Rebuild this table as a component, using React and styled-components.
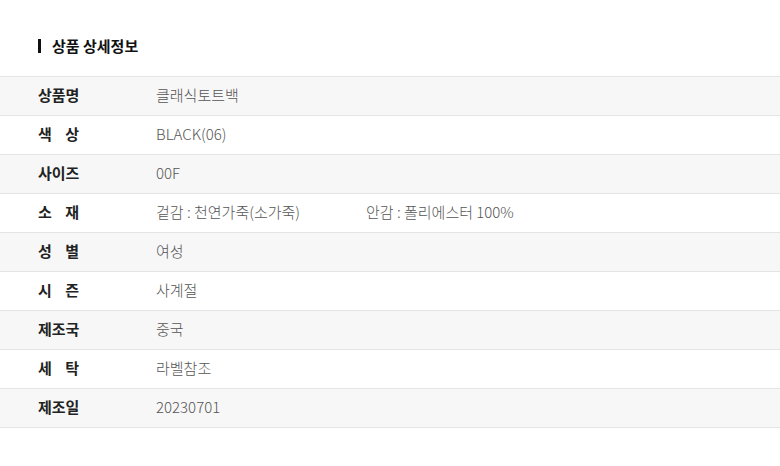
import React from "react";
import styled, { createGlobalStyle } from "styled-components";

const Global = createGlobalStyle`
  html, body { margin: 0; padding: 0; background: #fff; }
  body { font-family: "Noto Sans CJK KR", "Noto Sans", sans-serif; }
`;

const Page = styled.div`
  width: 780px;
  padding-top: 36px;
`;

const Title = styled.h2`
  margin: 0 0 20px 38px;
  display: flex;
  align-items: center;
  gap: 11px;
  font-size: 15px;
  font-weight: 700;
  color: #111;
  line-height: 20px;
  height: 20px;
  &::before {
    content: "";
    width: 3px;
    height: 14px;
    background: #111;
  }
`;

const Table = styled.div`
  border-top: 1px solid #e4e4e4;
`;

const Row = styled.div`
  display: flex;
  align-items: center;
  box-sizing: border-box;
  height: 39px;
  padding-bottom: 3px;
  border-bottom: 1px solid #e4e4e4;
  background: ${(p) => (p.$shade ? "#f7f7f7" : "#fff")};
`;

const Label = styled.div`
  width: 41px;
  margin-left: 38px;
  margin-right: 77px;
  display: flex;
  justify-content: ${(p) => (p.$spread ? "space-between" : "flex-start")};
  font-size: 15px;
  font-weight: 700;
  line-height: 20px;
  color: #222;
  white-space: nowrap;
`;

const Value = styled.div`
  font-size: 15px;
  font-weight: 300;
  line-height: 20px;
  color: #555;
  white-space: nowrap;
  width: ${(p) => (p.$w ? p.$w + "px" : "auto")};
`;

const rows = [
  { label: "상품명", value: ["클래식토트백"] },
  { label: "색상", spread: true, value: ["BLACK(06)"] },
  { label: "사이즈", value: ["00F"] },
  { label: "소재", spread: true, value: ["겉감 : 천연가죽(소가죽)", "안감 : 폴리에스터 100%"] },
  { label: "성별", spread: true, value: ["여성"] },
  { label: "시즌", spread: true, value: ["사계절"] },
  { label: "제조국", value: ["중국"] },
  { label: "세탁", spread: true, value: ["라벨참조"] },
  { label: "제조일", value: ["20230701"] },
];

export default function App() {
  return (
    <Page>
      <Global />
      <Title>상품 상세정보</Title>
      <Table>
        {rows.map((r, i) => (
          <Row key={r.label} $shade={i % 2 === 0}>
            <Label $spread={r.spread}>
              {r.spread ? r.label.split("").map((c) => <span key={c}>{c}</span>) : r.label}
            </Label>
            {r.value.map((v, j) => (
              <Value key={j} $w={r.value.length > 1 && j === 0 ? 210 : 0}>
                {v}
              </Value>
            ))}
          </Row>
        ))}
      </Table>
    </Page>
  );
}
